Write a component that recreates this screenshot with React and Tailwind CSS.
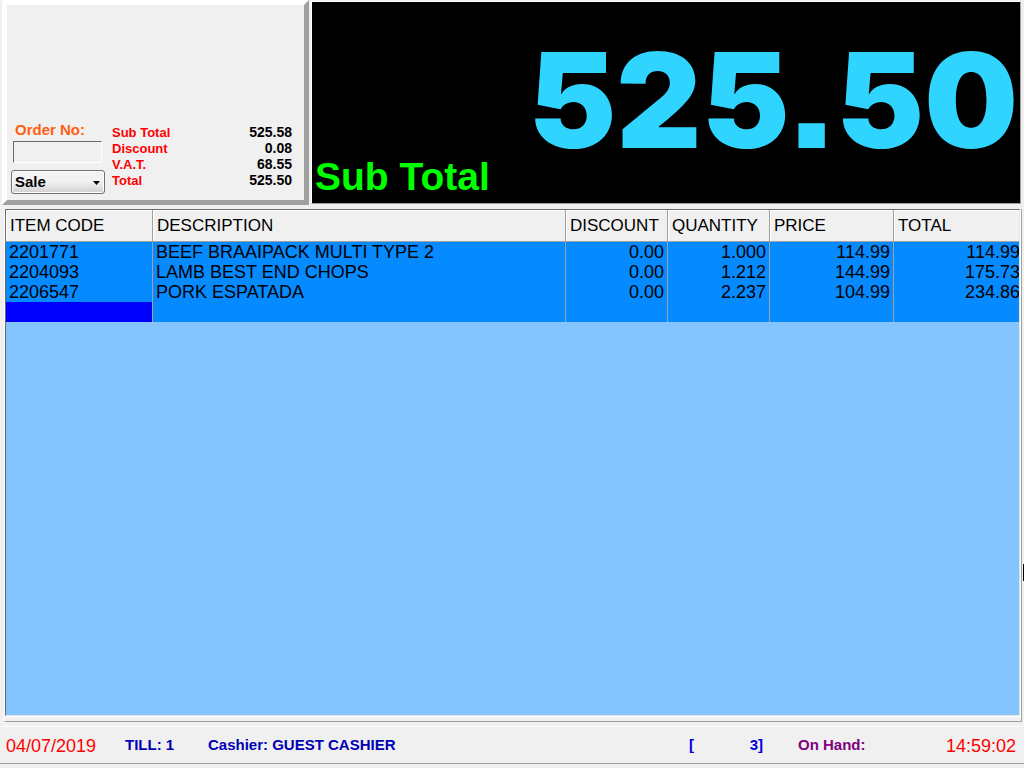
import React from 'react';

const totals = [
  { label: 'Sub Total', value: '525.58' },
  { label: 'Discount', value: '0.08' },
  { label: 'V.A.T.', value: '68.55' },
  { label: 'Total', value: '525.50' },
];

const columns = [
  { title: 'ITEM CODE', width: 'w-[147px]' },
  { title: 'DESCRIPTION', width: '' },
  { title: 'DISCOUNT', width: 'w-[102px]' },
  { title: 'QUANTITY', width: 'w-[102px]' },
  { title: 'PRICE', width: 'w-[124px]' },
  { title: 'TOTAL', width: 'w-[130px]' },
];

const items = [
  ['2201771', 'BEEF BRAAIPACK MULTI TYPE 2', '0.00', '1.000', '114.99', '114.99'],
  ['2204093', 'LAMB BEST END CHOPS', '0.00', '1.212', '144.99', '175.73'],
  ['2206547', 'PORK ESPATADA', '0.00', '2.237', '104.99', '234.86'],
];

function OrderPanel() {
  return (
    <div className="ml-[2px] flex w-[307px] shrink-0 items-end border-[5px] border-t-white border-r-[#a0a0a0] border-b-[#a0a0a0] border-l-white pl-1">
      <div className="mb-[6px] flex w-[94px] flex-col">
        <label htmlFor="order" className="pl-1 text-[15px] leading-[22px] font-bold text-[#ff6010]">
          Order No:
        </label>
        <input
          id="order"
          className="mr-[3px] ml-[2px] h-[22px] border border-t-[#696969] border-r-white border-b-white border-l-[#696969] bg-[#f0f0f0] px-1 text-[15px] outline-none"
        />
        <div className="relative mt-[7px]">
          <select
            aria-label="Order type"
            className="block h-6 w-full appearance-none rounded-[3px] border border-[#707070] bg-linear-to-b from-[#f2f2f2] from-50% to-[#cfcfcf] pl-[3px] text-[15px] font-bold text-black shadow-[inset_0_0_0_1px_#fcfcfc]"
          >
            <option>Sale</option>
          </select>
          <svg viewBox="0 0 7 4" className="pointer-events-none absolute top-[11px] right-[5px] h-1 w-[7px]">
            <path d="M0 0H7L3.5 4Z" fill="#000" />
          </svg>
        </div>
      </div>

      <dl className="mr-3 mb-3 ml-[7px] flex-1 font-bold">
        {totals.map((t) => (
          <div key={t.label} className="flex h-4 items-baseline justify-between leading-4">
            <dt className="text-[13px] text-[#ff0000]">{t.label}</dt>
            <dd className="text-[14px] text-black">{t.value}</dd>
          </div>
        ))}
      </dl>
    </div>
  );
}

function AmountDisplay() {
  return (
    <div className="mt-px mr-[3px] mb-px ml-[2px] flex min-w-0 flex-1 flex-col justify-end border border-t-white border-r-[#a0a0a0] border-b-[#a0a0a0] border-l-white bg-black">
      <div className="pr-[2px] text-right font-['Inter',sans-serif] text-[132px] leading-[110px] font-black text-[#2fd5ff] [font-feature-settings:'ss07']">
        525.50
      </div>
      <div className="pb-1 pl-[3px] text-[39px] leading-[44px] font-bold text-[#00ff00]">Sub Total</div>
    </div>
  );
}

function ItemGrid() {
  return (
    <div className="mt-1 mr-[2px] ml-1 flex flex-1 flex-col border-r border-b border-l border-r-[#a0a0a0] border-b-[#a0a0a0] border-l-white pb-[5px]">
      <div className="mr-px flex-1 overflow-hidden border-t border-r border-b border-l border-t-[#696969] border-r-[#e3e3e3] border-b-[#e3e3e3] border-l-[#696969] bg-[#84c5ff] shadow-[1px_1px_0_#fff]">
        <table className="w-[calc(100%+5px)] table-fixed border-separate border-spacing-0 text-[18px] text-black">
          <thead>
            <tr className="h-8 text-[17px]">
              {columns.map((col) => (
                <th
                  key={col.title}
                  className={`${col.width} border-r border-b border-[#a0a0a0] bg-[#f0f0f0] pl-1 text-left leading-5 font-normal whitespace-nowrap shadow-[inset_1px_1px_0_#fff]`}
                >
                  {col.title}
                </th>
              ))}
            </tr>
          </thead>
          <tbody className="bg-[#058aff]">
            {items.map((row) => (
              <tr key={row[0]} className="h-5">
                {row.map((cell, i) => (
                  <td
                    key={i}
                    className={`border-r border-[#a0a0a0] px-[3px] leading-5 whitespace-nowrap ${i > 1 ? 'text-right' : ''}`}
                  >
                    {cell}
                  </td>
                ))}
              </tr>
            ))}
            {/* entry row, first cell has the focus */}
            <tr className="h-5">
              {columns.map((col, i) => (
                <td key={col.title} className={`border-r border-[#a0a0a0] ${i === 0 ? 'bg-[#0000ff]' : ''}`} />
              ))}
            </tr>
          </tbody>
        </table>
      </div>
    </div>
  );
}

function StatusBar() {
  return (
    <footer className="mt-1 mb-1 flex h-[38px] items-center border-t border-b border-t-white border-b-[#a0a0a0] pr-2 pl-[6px] text-[15px] font-bold whitespace-nowrap">
      <div className="w-[119px] pt-[2px] text-[18px] font-normal text-[#ff0000]">04/07/2019</div>
      <div className="w-[83px] text-[#0000b4]">TILL: 1</div>
      <div className="flex-1 text-[#0000b4]">Cashier: GUEST CASHIER</div>
      <div className="mr-[35px] flex w-[74px] justify-between text-[#0000e0]">
        <span>[</span>
        <span>3]</span>
      </div>
      <div className="w-[148px] text-[#800080]">On Hand:</div>
      <div className="w-[70px] pt-[2px] text-right text-[18px] font-normal text-[#ff0000]">14:59:02</div>
    </footer>
  );
}

export default function App() {
  return (
    <div className="relative flex h-screen flex-col overflow-hidden bg-[#f0f0f0] font-['Liberation_Sans',Arial,sans-serif]">
      <div className="flex h-[205px] shrink-0">
        <OrderPanel />
        <AmountDisplay />
      </div>
      <ItemGrid />
      <StatusBar />
      <div className="absolute top-[564px] right-0 h-[17px] w-px bg-black" />
    </div>
  );
}
